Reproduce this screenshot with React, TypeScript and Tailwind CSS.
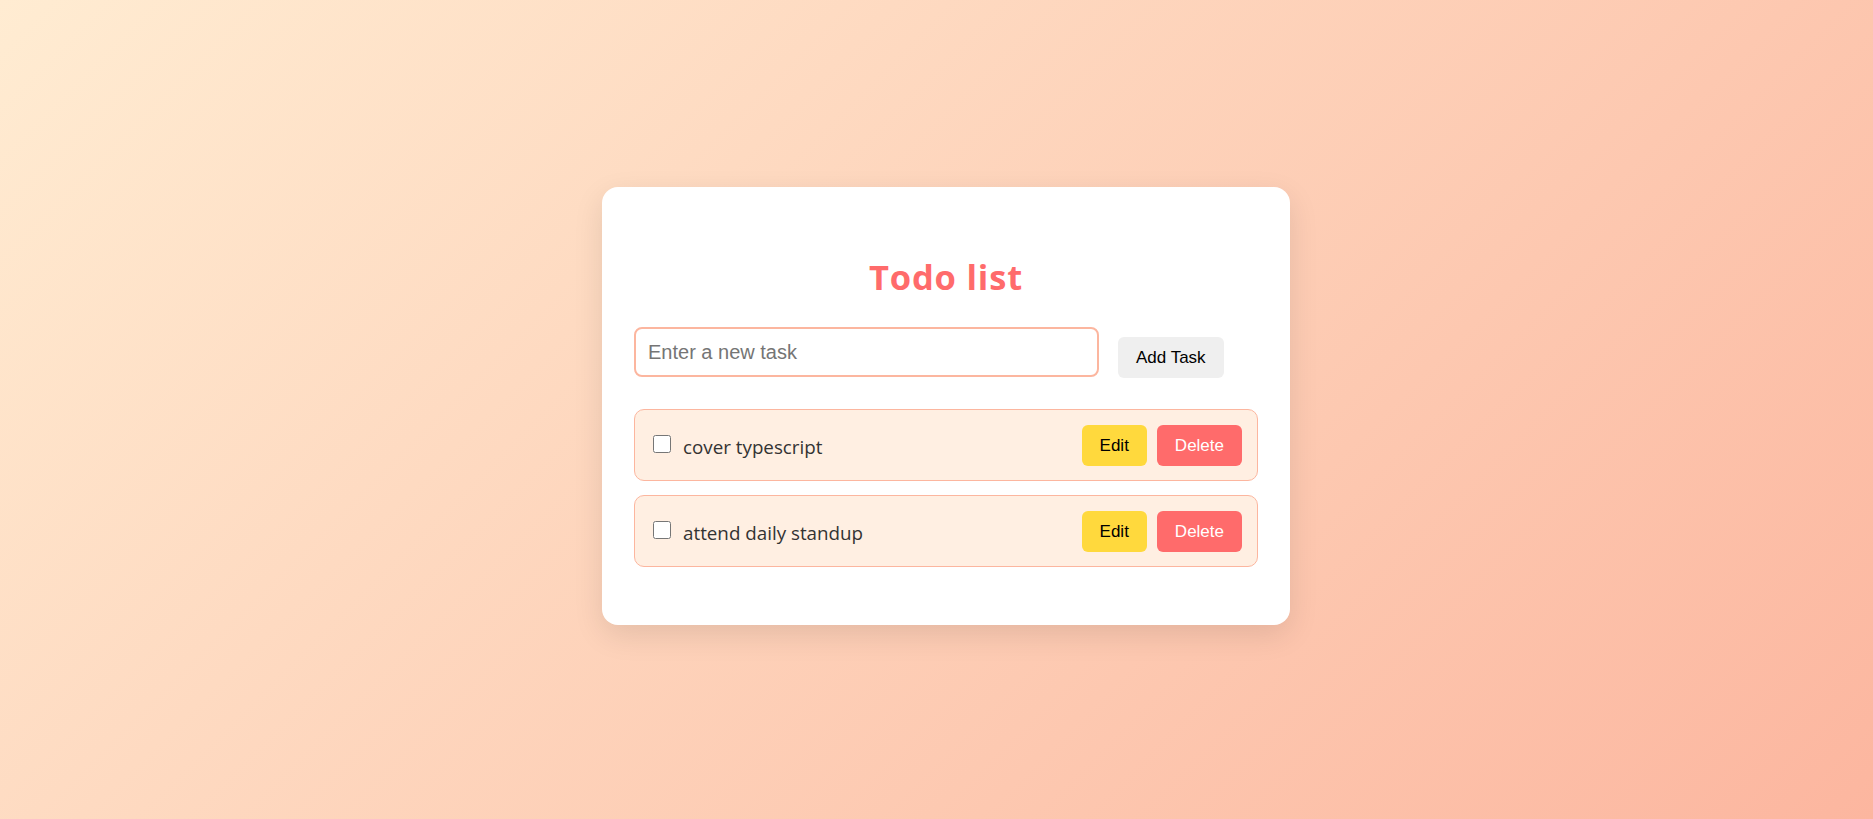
import { useState } from 'react';

type Todo = { id: number; text: string; done: boolean };

export default function App() {
  const [todos, setTodos] = useState<Todo[]>([
    { id: 1, text: 'cover typescript', done: false },
    { id: 2, text: 'attend daily standup', done: false },
  ]);
  const [draft, setDraft] = useState('');

  const addTodo = () => {
    if (!draft.trim()) return;
    setTodos([...todos, { id: Date.now(), text: draft.trim(), done: false }]);
    setDraft('');
  };

  return (
    <div className="h-screen w-full flex items-center justify-center pl-[19px] pb-[7px] bg-[linear-gradient(135deg,#ffecd2_0%,#fcb69f_100%)] font-['Open_Sans','Noto_Sans',sans-serif]">
      <div className="w-[688px] bg-white rounded-[16px] shadow-[0_10px_30px_rgba(0,0,0,0.1)] px-8 pt-[73px] pb-[58px]">
        <h1 className="text-[34.5px] leading-none font-bold tracking-[0.8px] text-[#ff6b6b] text-center">Todo list</h1>

        <div className="flex items-start gap-[19px] mt-[33px] font-['Liberation_Sans',Arial,sans-serif]">
          <input
            value={draft}
            onChange={(e) => setDraft(e.target.value)}
            placeholder="Enter a new task"
            className="w-[465px] h-[50px] border-2 border-[#fcb69f] rounded-[8px] px-3 text-[20px] text-black placeholder:text-[#757575] outline-none"
          />
          <button
            onClick={addTodo}
            className="mt-[10px] h-[41px] px-[18px] rounded-[6px] bg-[#efefef] text-[17px] text-black"
          >
            Add Task
          </button>
        </div>

        <ul className="mt-[31px] flex flex-col gap-[14px]">
          {todos.map((todo) => (
            <li
              key={todo.id}
              className="h-[72px] flex items-center justify-between bg-[#ffefe2] border border-[#fcb69f] rounded-[10px] pl-[18px] pr-[15px]"
            >
              <label className="flex items-center gap-[12px] mt-[3px]">
                <input
                  type="checkbox"
                  checked={todo.done}
                  onChange={() =>
                    setTodos(todos.map((t) => (t.id === todo.id ? { ...t, done: !t.done } : t)))
                  }
                  className="w-[18px] h-[18px] -mt-[6px]"
                />
                <span className="text-[18.8px] text-[#333]">{todo.text}</span>
              </label>
              <div className="flex gap-[10px] font-['Liberation_Sans',Arial,sans-serif]">
                <button className="h-[41px] px-[18px] rounded-[6px] bg-[#ffd93d] text-[17px] text-black">Edit</button>
                <button
                  onClick={() => setTodos(todos.filter((t) => t.id !== todo.id))}
                  className="h-[41px] px-[18px] rounded-[6px] bg-[#ff6b6b] text-[17px] text-white"
                >
                  Delete
                </button>
              </div>
            </li>
          ))}
        </ul>
      </div>
    </div>
  );
}
